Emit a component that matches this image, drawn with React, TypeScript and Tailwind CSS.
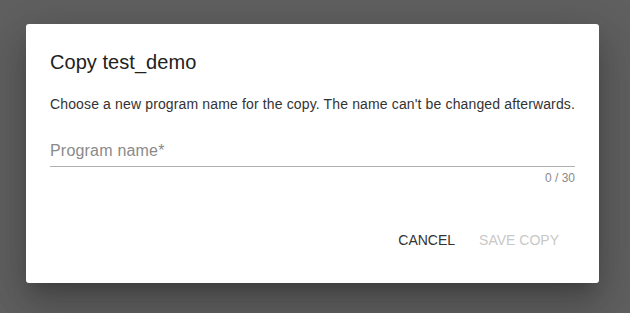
import { useState } from 'react';

export default function App() {
  const [name, setName] = useState('');

  return (
    <div
      className="w-[630px] h-[313px] bg-[#606060] pl-[26px] pt-[24px]"
      style={{ fontFamily: '"Liberation Sans", Arial, sans-serif' }}
    >
      <div className="w-[573px] h-[259px] bg-white rounded-[3px] shadow-[0_11px_15px_-7px_rgba(0,0,0,0.2),0_24px_38px_3px_rgba(0,0,0,0.14),0_9px_46px_8px_rgba(0,0,0,0.12)] px-6 pt-[22px] flex flex-col">
        {/* Title */}
        <h2 className="text-[20px] leading-[32px] text-[#212121] font-normal tracking-[0.05px]">Copy test_demo</h2>

        {/* Content */}
        <p className="mt-4 text-[14px] leading-[20px] text-[#333] tracking-[0.14px] whitespace-nowrap">
          Choose a new program name for the copy. The name can't be changed afterwards.
        </p>

        {/* Input */}
        <div className="mt-[25px]">
          <div className="border-b border-[#b0b0b0] pb-[3px]">
            <input
              type="text"
              value={name}
              maxLength={30}
              onChange={(e) => setName(e.target.value)}
              placeholder="Program name*"
              className="w-full text-[16px] leading-[20px] tracking-[0.2px] text-[#212121] placeholder:text-[#8a8a8a] outline-none bg-transparent"
            />
          </div>
          <div className="mt-[3px] text-right text-[12px] leading-[16px] text-[#8a8a8a]">
            {name.length} / 30
          </div>
        </div>

        {/* Actions */}
        <div className="mt-[36px] flex justify-end gap-2 pr-2">
          <button className="h-9 px-2 text-[14px] uppercase text-[#333]">
            Cancel
          </button>
          <button
            disabled={!name.trim()}
            className="h-9 px-2 text-[14px] uppercase text-[#c8c8c8] disabled:cursor-default"
          >
            Save copy
          </button>
        </div>
      </div>
    </div>
  );
}
